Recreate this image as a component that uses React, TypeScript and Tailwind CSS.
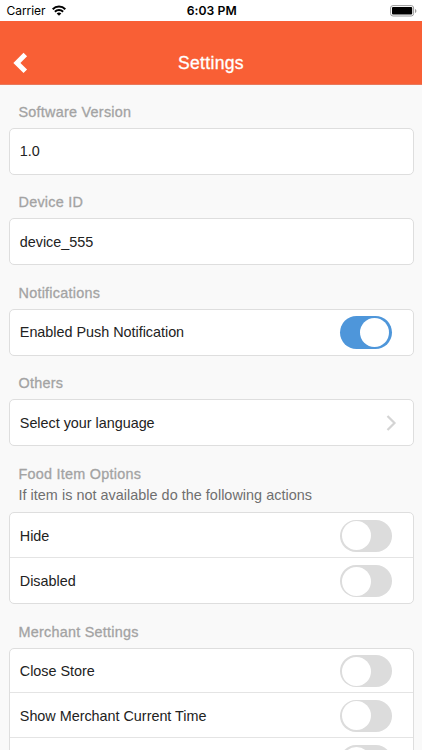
import { useState, type ReactNode } from "react";
import clsx from "clsx";

function StatusBar() {
  return (
    <div className="flex h-[21px] items-center justify-between bg-white pl-[6.5px] pr-[5px] font-['Inter',sans-serif] text-black">
      <div className="flex w-[100px] items-center gap-[6px]">
        <span className="w-[39px] text-[12px] leading-[21px] tracking-[-0.05px]">Carrier</span>
        <svg width="14" height="11" viewBox="0 0 14 11" fill="none" stroke="#000" strokeWidth="2">
          <path d="M.7 4.200a8.900 8.900 0 0 1 12.600 0" />
          <path d="M2.900 6.700a5.800 5.800 0 0 1 8.200 0" />
          <path d="M7 10.800 4.700 8.500a3.300 3.300 0 0 1 4.600 0z" fill="#000" stroke="none" />
        </svg>
      </div>
      <span className="text-[12.2px] font-semibold leading-[22px] tracking-[0.05px]">6:03 PM</span>
      <div className="flex w-[100px] justify-end">
        <svg width="27" height="12" viewBox="0 0 27 12">
          <rect x="0.6" y="0.6" width="23" height="10.4" rx="2.4" fill="none" stroke="#9a9a9a" />
          <rect x="2" y="2" width="20.2" height="7.6" rx="1" fill="#000" />
          <path d="M25 4v4c.8-.3 1.4-1.100 1.400-2S25.800 4.300 25 4z" fill="#9a9a9a" />
        </svg>
      </div>
    </div>
  );
}

function Header({ title }: { title: string }) {
  return (
    <header className="flex h-[64px] border-b border-[#e8795c] bg-[#f95f35] pt-[20px] text-white">
      <button className="flex w-[60px] items-center pl-[13px]" aria-label="Back">
        <svg width="15" height="22" viewBox="0 0 15 22" fill="none" stroke="#fff" strokeWidth="5">
          <path d="M12.300 2.500 3.900 10.900l8.400 8.400" />
        </svg>
      </button>
      <h1 className="flex-1 text-center text-[17.6px] leading-[45px] tracking-[0.3px] [-webkit-text-stroke:0.3px_#fff]">
        {title}
      </h1>
      <div className="w-[60px]" />
    </header>
  );
}

function Section({ title, note, children }: { title: string; note?: string; children: ReactNode }) {
  return (
    <section>
      <div className={clsx("pl-[10px] pt-[17.6px] text-[14.4px]", note ? "h-[66.1px]" : "h-[43.6px]")}>
        <h2 className="leading-[21px] tracking-[0.25px] text-[#a3a3a3] [-webkit-text-stroke:0.3px_#a3a3a3]">{title}</h2>
        {note && <p className="leading-[21px] tracking-[0.03px] text-[#6f6f6f]">{note}</p>}
      </div>
      <div className="divide-y divide-[#e4e4e4] rounded-[5px] border border-[#dedede] bg-white">{children}</div>
    </section>
  );
}

function Row({ label, children }: { label: string; children?: ReactNode }) {
  return (
    <div className="flex h-[44.8px] items-center justify-between pl-[10.3px] pr-[21px] pt-px only:h-[45px] only:pt-0">
      <span className="text-[14.4px] leading-5 tracking-[-0.02px] text-[#222]">{label}</span>
      {children}
    </div>
  );
}

function Toggle({ defaultOn = false }: { defaultOn?: boolean }) {
  const [on, setOn] = useState(defaultOn);
  return (
    <button
      role="switch"
      aria-checked={on}
      onClick={() => setOn(!on)}
      className={clsx(
        "flex h-[32.5px] w-[52px] shrink-0 items-center rounded-full",
        on ? "justify-end bg-[#4e96da] pr-[2.4px]" : "justify-start bg-[#dcdcdc] pl-[2.2px]"
      )}
    >
      <span className="size-[29px] rounded-full bg-white" />
    </button>
  );
}

export default function App() {
  return (
    <div className="h-[750px] overflow-hidden bg-[#f9f9f9] font-['Liberation_Sans',Arial,sans-serif]">
      <StatusBar />
      <Header title="Settings" />
      <main className="-mt-px px-[8.5px]">
        <Section title="Software Version">
          <Row label="1.0" />
        </Section>
        <Section title="Device ID">
          <Row label="device_555" />
        </Section>
        <Section title="Notifications">
          <Row label="Enabled Push Notification">
            <Toggle defaultOn />
          </Row>
        </Section>
        <Section title="Others">
          <Row label="Select your language">
            <svg className="-mr-[5px]" width="11" height="18" viewBox="0 0 11 18" fill="none" stroke="#d4d4d4" strokeWidth="2.2">
              <path d="m1.500 2 7 7-7 7" />
            </svg>
          </Row>
        </Section>
        <Section title="Food Item Options" note="If item is not available do the following actions">
          <Row label="Hide">
            <Toggle />
          </Row>
          <Row label="Disabled">
            <Toggle />
          </Row>
        </Section>
        <Section title="Merchant Settings">
          <Row label="Close Store">
            <Toggle />
          </Row>
          <Row label="Show Merchant Current Time">
            <Toggle />
          </Row>
          <Row label="">
            <Toggle />
          </Row>
        </Section>
      </main>
    </div>
  );
}
